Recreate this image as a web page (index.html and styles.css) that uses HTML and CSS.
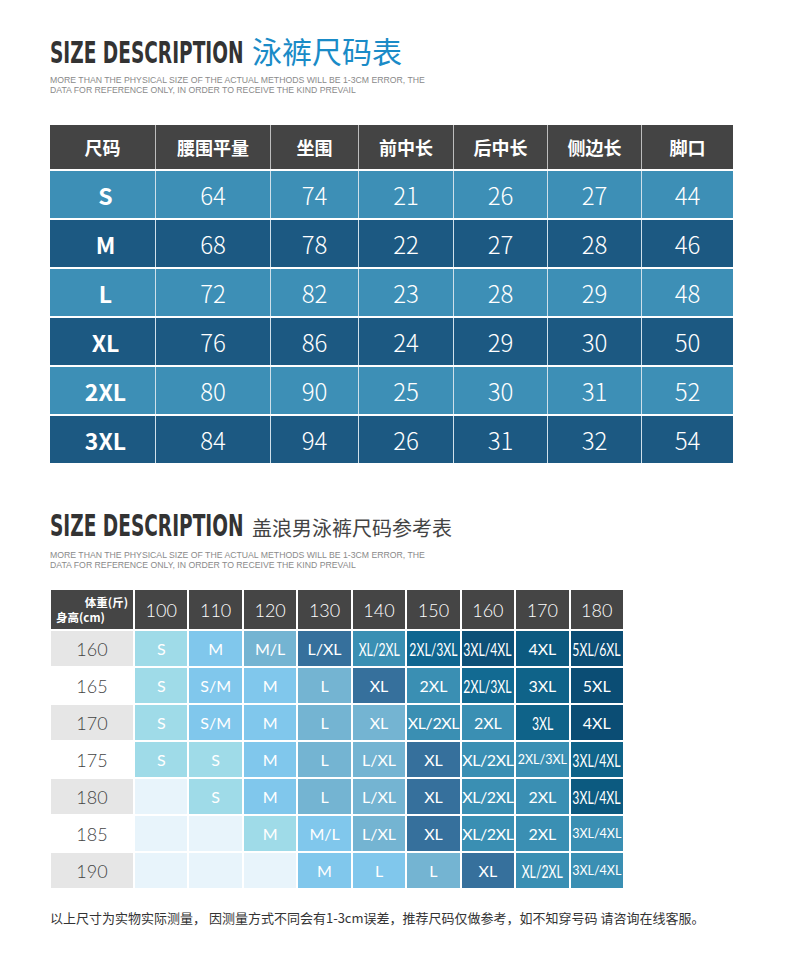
FILE: index.html
```html
<!DOCTYPE html>
<html lang="zh-CN">
<head>
<meta charset="utf-8">
<title>泳裤尺码表</title>
<link rel="stylesheet" href="styles.css">
</head>
<body>
<div class="page">
  <div class="title">
    <span class="en"><span class="en-in">SIZE DESCRIPTION</span></span><span class="zh-blue">泳裤尺码表</span>
  </div>
  <p class="sub">MORE THAN THE PHYSICAL SIZE OF THE ACTUAL METHODS WILL BE 1-3CM ERROR, THE<br>DATA FOR REFERENCE ONLY, IN ORDER TO RECEIVE THE KIND PREVAIL</p>

  <div class="t1">
    <div class="t1-row t1-head"><div>尺码</div><div>腰围平量</div><div>坐围</div><div>前中长</div><div>后中长</div><div>侧边长</div><div>脚口</div></div>
    <div class="t1-row lt"><div class="sz">S</div><div>64</div><div>74</div><div>21</div><div>26</div><div>27</div><div>44</div></div>
    <div class="t1-row dk"><div class="sz">M</div><div>68</div><div>78</div><div>22</div><div>27</div><div>28</div><div>46</div></div>
    <div class="t1-row lt"><div class="sz">L</div><div>72</div><div>82</div><div>23</div><div>28</div><div>29</div><div>48</div></div>
    <div class="t1-row dk"><div class="sz">XL</div><div>76</div><div>86</div><div>24</div><div>29</div><div>30</div><div>50</div></div>
    <div class="t1-row lt"><div class="sz">2XL</div><div>80</div><div>90</div><div>25</div><div>30</div><div>31</div><div>52</div></div>
    <div class="t1-row dk"><div class="sz">3XL</div><div>84</div><div>94</div><div>26</div><div>31</div><div>32</div><div>54</div></div>
  </div>

  <div class="title title-2">
    <span class="en"><span class="en-in">SIZE DESCRIPTION</span></span><span class="zh-dark">盖浪男泳裤尺码参考表</span>
  </div>
  <p class="sub">MORE THAN THE PHYSICAL SIZE OF THE ACTUAL METHODS WILL BE 1-3CM ERROR, THE<br>DATA FOR REFERENCE ONLY, IN ORDER TO RECEIVE THE KIND PREVAIL</p>

  <div class="t2">
    <div class="t2-row t2-head">
      <div class="corner"><span class="c-top">体重(斤)</span><span class="c-bot">身高(cm)</span></div>
      <div>100</div><div>110</div><div>120</div><div>130</div><div>140</div><div>150</div><div>160</div><div>170</div><div>180</div>
    </div>
    <div class="t2-row">
      <div class="hgt gray">160</div>
      <div class="cS">S</div><div class="cM">M</div><div class="cL">M/L</div><div class="cX">L/XL</div>
      <div class="cT"><span class="tall">XL/2XL</span></div><div class="cD5"><span class="tall">2XL/3XL</span></div><div class="cD6"><span class="tall">3XL/4XL</span></div><div class="cD3">4XL</div><div class="cD2"><span class="tall">5XL/6XL</span></div>
    </div>
    <div class="t2-row">
      <div class="hgt">165</div>
      <div class="cS">S</div><div class="cM">S/M</div><div class="cM">M</div><div class="cL">L</div>
      <div class="cX">XL</div><div class="cT">2XL</div><div class="cD4"><span class="tall">2XL/3XL</span></div><div class="cD1">3XL</div><div class="cD2">5XL</div>
    </div>
    <div class="t2-row">
      <div class="hgt gray">170</div>
      <div class="cS">S</div><div class="cM">S/M</div><div class="cM">M</div><div class="cL">L</div>
      <div class="cL">XL</div><div class="cT"><span class="snug">XL/2XL</span></div><div class="cT">2XL</div><div class="cD1"><span class="tall">3XL</span></div><div class="cD2">4XL</div>
    </div>
    <div class="t2-row">
      <div class="hgt">175</div>
      <div class="cS">S</div><div class="cS">S</div><div class="cM">M</div><div class="cL">L</div>
      <div class="cL">L/XL</div><div class="cX">XL</div><div class="cT"><span class="snug">XL/2XL</span></div><div class="cT"><span class="sm">2XL/3XL</span></div><div class="cD1"><span class="tall">3XL/4XL</span></div>
    </div>
    <div class="t2-row">
      <div class="hgt gray">180</div>
      <div class="c0"></div><div class="cS">S</div><div class="cM">M</div><div class="cL">L</div>
      <div class="cL">L/XL</div><div class="cX">XL</div><div class="cT"><span class="snug">XL/2XL</span></div><div class="cT">2XL</div><div class="cD3"><span class="tall">3XL/4XL</span></div>
    </div>
    <div class="t2-row">
      <div class="hgt">185</div>
      <div class="c0"></div><div class="c0"></div><div class="cS">M</div><div class="cM">M/L</div>
      <div class="cL">L/XL</div><div class="cX">XL</div><div class="cT"><span class="snug">XL/2XL</span></div><div class="cT">2XL</div><div class="cT"><span class="sm">3XL/4XL</span></div>
    </div>
    <div class="t2-row">
      <div class="hgt gray">190</div>
      <div class="c0"></div><div class="c0"></div><div class="c0"></div><div class="cM">M</div>
      <div class="cM">L</div><div class="cL">L</div><div class="cX">XL</div><div class="cT"><span class="tall">XL/2XL</span></div><div class="cT"><span class="sm">3XL/4XL</span></div>
    </div>
  </div>

  <p class="note">以上尺寸为实物实际测量， 因测量方式不同会有1-3cm误差，推荐尺码仅做参考，如不知穿号码 请咨询在线客服。</p>
</div>
</body>
</html>
```

FILE: styles.css
```css
* { box-sizing: border-box; }
html, body { margin: 0; padding: 0; background: #fff; }

.page {
  width: 790px;
  height: 964px;
  padding: 32px 0 0 50px;
  overflow: hidden;
  font-family: "Noto Sans CJK SC", sans-serif;
}

/* titles */
.title {
  display: flex;
  align-items: baseline;
  height: 36px;
  white-space: nowrap;
}
.title-2 { margin-top: 44px; }
.en {
  display: inline-block;
  width: 202px;
  font-family: "DejaVu Sans Condensed", "DejaVu Sans", sans-serif;
  font-stretch: condensed;
  font-weight: bold;
  font-size: 31px;
  line-height: 36px;
  color: #333;
}
.en-in {
  display: inline-block;
  transform: scaleX(0.665);
  transform-origin: 0 50%;
}
.zh-blue {
  font-size: 30px;
  line-height: 36px;
  color: #1a8bc7;
}
.zh-dark {
  font-size: 20px;
  line-height: 36px;
  color: #444;
}

.sub {
  margin: 7px 0 0;
  font-family: "Liberation Sans", Arial, sans-serif;
  font-size: 8.7px;
  line-height: 10px;
  color: #8a8a8a;
  white-space: nowrap;
}

/* table 1 */
.t1 {
  margin-top: 30px;
  width: 683px;
  display: flex;
  flex-direction: column;
  gap: 2px;
}
.t1-row {
  display: grid;
  grid-template-columns: 105px 114px 87px 94px 93px 93px minmax(0, 1fr);
  column-gap: 1px;
  height: 47px;
  background: #cfe0ea;
}
.t1-row > div {
  display: flex;
  align-items: center;
  justify-content: center;
  color: #fff;
  font-size: 24px;
  font-weight: 300;
}
.t1-head { height: 44px; background: #bdbdbd; }
.t1-head > div { background: #444; font-size: 18px; font-weight: bold; }
.lt > div { background: #3d8fb6; }
.dk > div { background: #1c5982; }
.t1-row > .sz { font-weight: bold; font-size: 23px; padding-left: 6px; }

/* table 2 */
.t2 {
  margin: 20px 0 0 1px;
  width: 572px;
  display: flex;
  flex-direction: column;
  gap: 2px;
  font-family: "Lato", "Open Sans", sans-serif;
}
.t2-row {
  display: grid;
  grid-template-columns: 82px repeat(9, minmax(0, 1fr));
  column-gap: 2px;
  height: 35px;
}
.t2-row > div {
  display: flex;
  align-items: center;
  justify-content: center;
  color: #fff;
  font-size: 16px;
  white-space: nowrap;
  min-width: 0;
}
.t2-head { height: 39px; }
.t2-head > div { background: #454545; font-size: 18px; font-weight: 300; }
.t2-head > .corner {
  flex-direction: column;
  align-items: stretch;
  justify-content: center;
  padding: 0 5px 0 5px;
  font-family: "Noto Sans CJK SC", sans-serif;
  font-size: 11.5px;
  font-weight: bold;
  line-height: 15px;
}
.c-top { display: block; text-align: right; }
.c-bot { display: block; text-align: left; }

.t2-row > .hgt { color: #444; font-size: 18px; font-weight: 300; background: #fff; }
.t2-row > .gray { background: #e6e6e6; }

.tall { display: inline-block; flex: none; font-size: 18px; transform: scaleX(0.68); }
.snug { display: inline-block; flex: none; letter-spacing: -0.4px; }
.sm { font-size: 12.5px; }

.c0 { background: #e8f4fb; }
.cS { background: #9fdbe8; }
.cM { background: #80c7ec; }
.cL { background: #74b4d2; }
.cX { background: #36709c; }
.cT { background: #3a8fb3; }
.cD1 { background: #0f6389; }
.cD2 { background: #0b4d74; }
.cD3 { background: #0c5a80; }
.cD4 { background: #126a92; }
.cD5 { background: #0f6690; }
.cD6 { background: #0d5077; }

.note {
  margin: 20px 0 0;
  font-size: 13px;
  line-height: 20px;
  color: #333;
  white-space: nowrap;
}
```
